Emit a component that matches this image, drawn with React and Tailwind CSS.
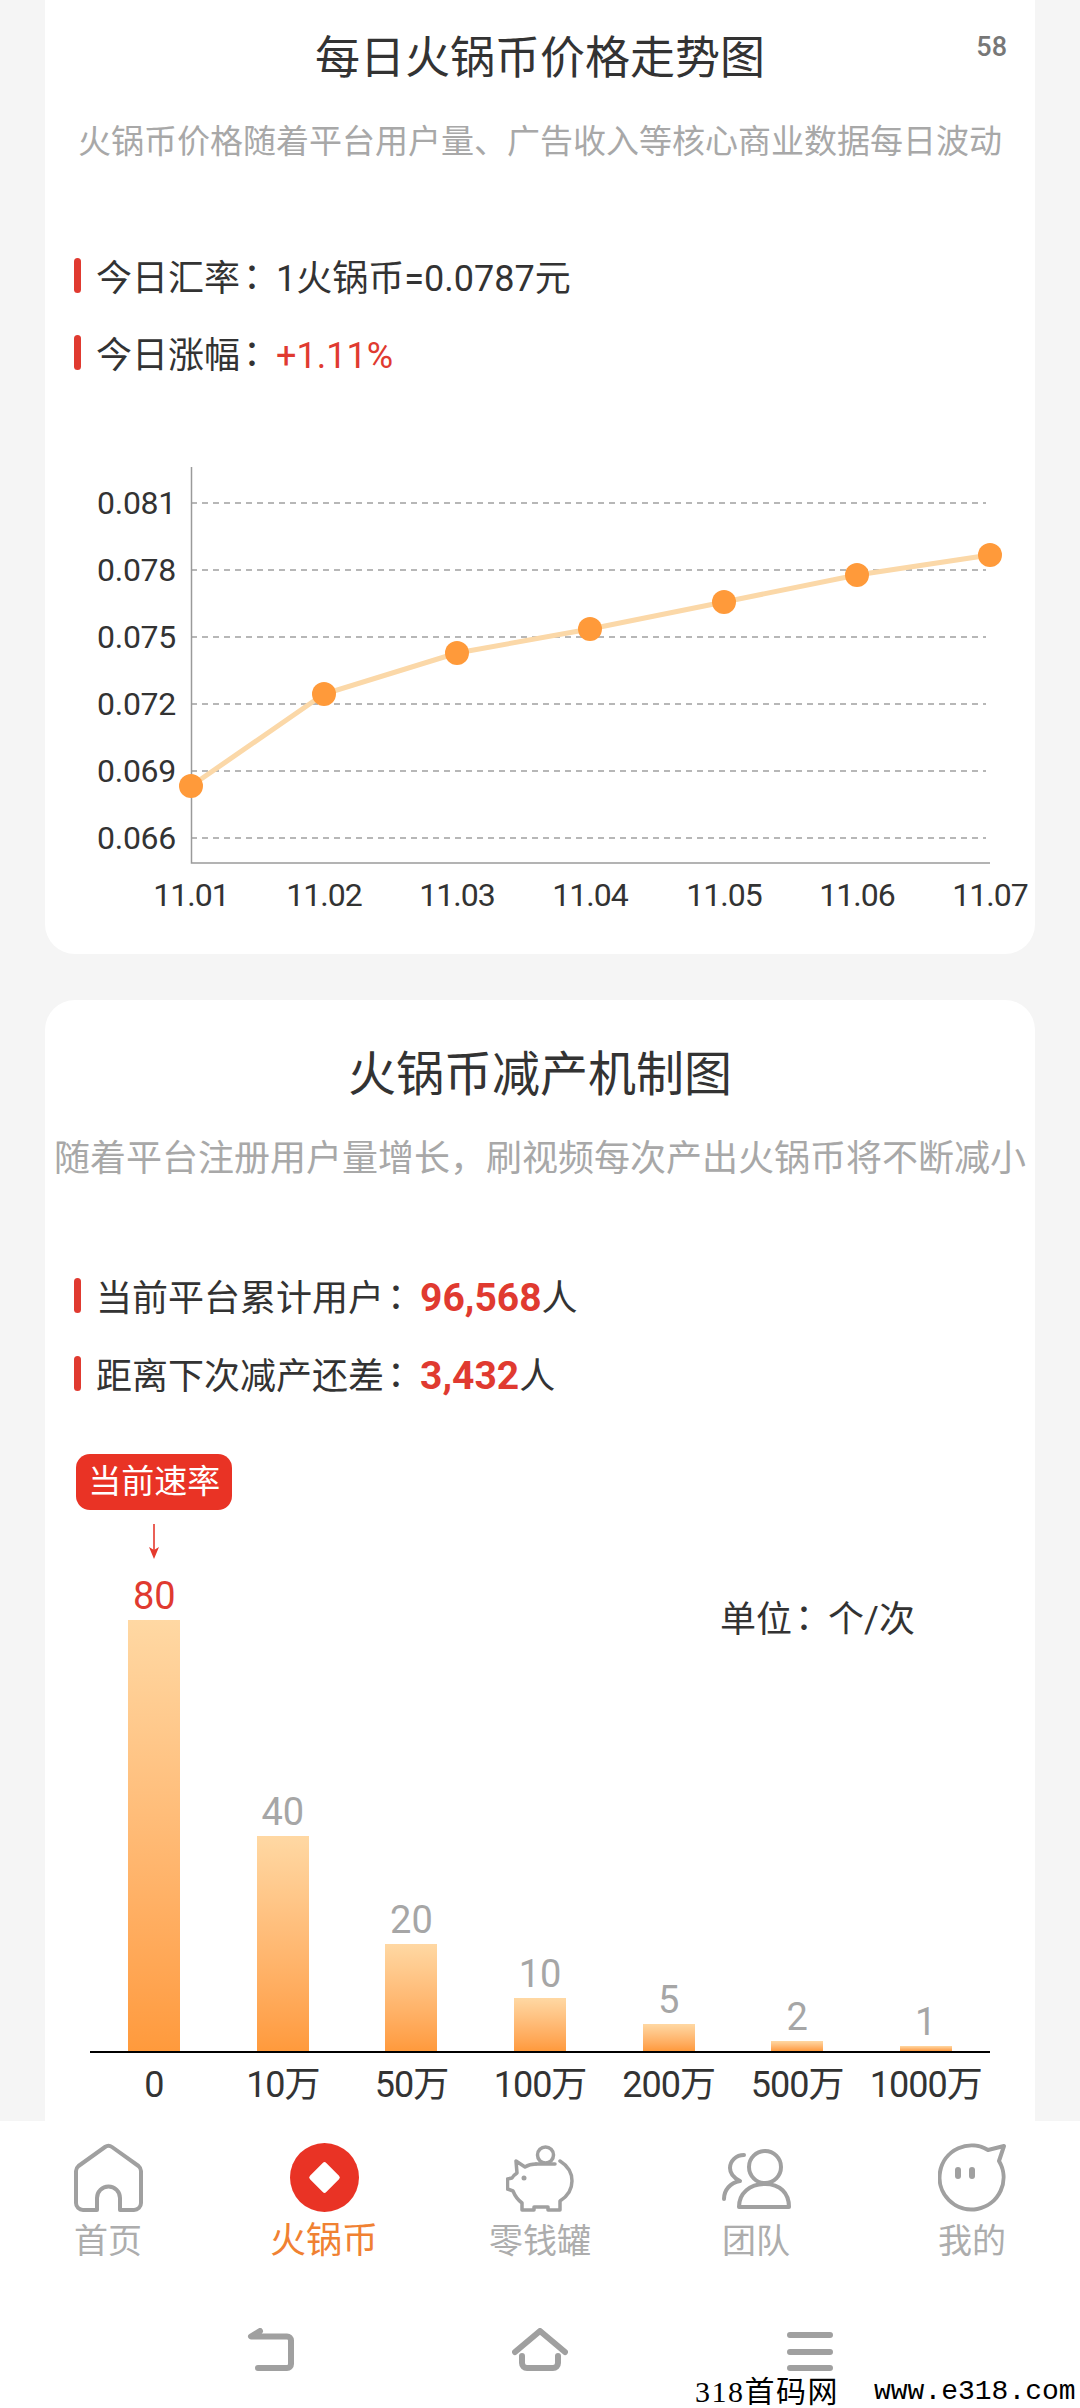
const prices = [
  [191, 786, '11.01'],
  [324, 694, '11.02'],
  [457, 653, '11.03'],
  [590, 629, '11.04'],
  [724, 602, '11.05'],
  [857, 575, '11.06'],
  [990, 555, '11.07'],
];
const ticks = [
  [503, '0.081'],
  [570, '0.078'],
  [637, '0.075'],
  [704, '0.072'],
  [771, '0.069'],
  [838, '0.066'],
];

const bars = [
  { value: 40, label: '10万', h: 'h-[215px]' },
  { value: 20, label: '50万', h: 'h-[107px]' },
  { value: 10, label: '100万', h: 'h-[53px]' },
  { value: 5, label: '200万', h: 'h-[27px]' },
  { value: 2, label: '500万', h: 'h-[10px]' },
  { value: 1, label: '1000万', h: 'h-[5px]' },
];

function Stat({ children }) {
  return (
    <div className="flex items-center gap-[15px] h-[44px] pl-[29px] text-[36px] text-[#333] whitespace-nowrap">
      <span className="w-[7px] h-[35px] rounded-full bg-[#e03a30]" />
      <span className="pt-[3px]">{children}</span>
    </div>
  );
}

// the colon sits mid-height and left of centre in the screenshot
function Colon() {
  return <span className="ml-[3px] mr-[15px] [font-feature-settings:'halt'] [font-family:'Noto_Sans_CJK_TC',sans-serif]">：</span>;
}

function PriceChart() {
  return (
    <svg viewBox="45 460 990 470" className="block w-[990px] h-[470px] mt-[86px]">
      {ticks.map(([y, t]) => (
        <g key={t}>
          <line x1="191" x2="986" y1={y} y2={y} stroke="#a0a0a0" strokeWidth="1.5" strokeDasharray="6 5" />
          <text x="176" y={y + 11} textAnchor="end" fontSize="32" letterSpacing="-0.3" fill="#333">{t}</text>
        </g>
      ))}
      <path d="M191.5 467V863H990" fill="none" stroke="#9a9a9a" strokeWidth="1.5" />
      <polyline points={prices.map((p) => `${p[0]},${p[1]}`).join(' ')} fill="none" stroke="#fbd8a8" strokeWidth="5" />
      {prices.map(([x, y, d]) => (
        <g key={d}>
          <circle cx={x} cy={y} r="12" fill="#ff9a3a" />
          <text x={x} y="906" textAnchor="middle" fontSize="32" letterSpacing="-1" fill="#333">{d}</text>
        </g>
      ))}
    </svg>
  );
}

function BarChart() {
  return (
    <div className="w-[900px] ml-[45px]">
      <div className="flex items-end border-b-2 border-black">
        <div className="flex-1 min-w-0 flex flex-col items-center">
          <div className="shrink-0 w-[156px] h-[56px] rounded-[14px] bg-[#e93325] text-white text-[33px] flex items-center justify-center whitespace-nowrap">
            当前速率
          </div>
          <svg width="14" height="36" viewBox="0 0 14 36" className="mt-[14px]">
            <path d="M7 0V30" stroke="#e5392d" strokeWidth="1.6" />
            <path d="M2 23L7 35L12 23L7 26Z" fill="#e5392d" />
          </svg>
          <div className="mt-[14px] mb-[2px] h-[44px] leading-[44px] text-[38px] text-[#e03a30]">80</div>
          <div className="w-[52px] h-[431px] bg-linear-to-b from-[#ffd8a3] to-[#ff9a3c]" />
        </div>
        {bars.map((b) => (
          <div key={b.label} className="flex-1 min-w-0 flex flex-col items-center">
            <div className="mb-[2px] h-[44px] leading-[44px] text-[38px] text-[#a6a6a6]">{b.value}</div>
            <div className={`w-[52px] ${b.h} bg-linear-to-b from-[#ffd8a3] to-[#ff9a3c]`} />
          </div>
        ))}
      </div>
      <div className="flex mt-[10px] h-[44px] leading-[44px] text-[36px] text-[#333] whitespace-nowrap">
        <div className="flex-1 min-w-0 text-center">0</div>
        {bars.map((b) => (
          <div key={b.label} className="flex-1 min-w-0 flex justify-center tracking-[-1px]">{b.label}</div>
        ))}
      </div>
    </div>
  );
}

function TabItem({ icon, label, active }) {
  return (
    <div className="flex flex-col items-center">
      <div className="h-[69px]">{icon}</div>
      <div className={`mt-[7px] h-[44px] leading-[44px] ${active ? 'text-[36px] text-[#f08132]' : 'text-[34px] text-[#adadad]'}`}>
        {label}
      </div>
    </div>
  );
}

const iconProps = { width: 69, height: 69, viewBox: '0 0 69 69', fill: 'none', stroke: '#a0a0a0', strokeWidth: 4, strokeLinejoin: 'round', strokeLinecap: 'round' };

const HomeIcon = (
  <svg {...iconProps}>
    <path d="M23 67H9a7 7 0 0 1-7-7V28a7 7 0 0 1 2.5-5L31 4a6 6 0 0 1 7 0L64.5 23a7 7 0 0 1 2.5 5V60a7 7 0 0 1-7 7H46V55a11.5 11.5 0 0 0-23 0Z" />
  </svg>
);
const CoinIcon = (
  <svg width="69" height="69" viewBox="0 0 69 69">
    <circle cx="34.5" cy="34.5" r="34.5" fill="#e93325" />
    <rect x="23" y="23" width="23" height="23" rx="2.5" fill="#fff" transform="rotate(45 34.5 34.5)" />
  </svg>
);
const PigIcon = (
  <svg {...iconProps} strokeWidth={3.5}>
    <circle cx="39.5" cy="12" r="8" />
    <path d="M30 21H49" />
    <path d="M30 21C26 21 22 22 19 24L10 18L11 30C8 32 7 33 6 35L1.5 36V46L7 48C9 53 12 57 16 60V67H28V64H42V67H54V58C62 53 66 46 66 38C66 30 62 23 54 18" />
    <circle cx="18" cy="35" r="2.5" fill="#a0a0a0" stroke="none" />
  </svg>
);
const TeamIcon = (
  <svg {...iconProps}>
    <circle cx="43" cy="24" r="16" />
    <path d="M17 64C17 50 28 41 43 41C58 41 67 50 67 64Z" />
    <path d="M22 12C14 12 8 18 8 25C8 30 12 35 18 38C8 40 2 47 2 56" />
  </svg>
);
const MeIcon = (
  <svg {...iconProps}>
    <path d="M50 7L66 3L61 18A32 32 0 1 1 50 7Z" />
    <rect x="17" y="24" width="6" height="12" rx="3" fill="#a0a0a0" stroke="none" />
    <rect x="31" y="24" width="6" height="12" rx="3" fill="#a0a0a0" stroke="none" />
  </svg>
);

export default function App() {
  return (
    <div className="relative w-[1080px] h-[2408px] overflow-hidden flex flex-col bg-[#f5f5f5] [font-family:Roboto,'Noto_Sans_CJK_SC',sans-serif]">
      <section className="relative mx-[45px] h-[954px] shrink-0 bg-white rounded-b-[30px] pt-[29px]">
        <div className="absolute right-[28px] top-[27px] text-[27px] font-medium text-[#777]">58</div>
        <h1 className="text-center text-[45px] leading-[60px] font-normal text-[#333]">每日火锅币价格走势图</h1>
        <p className="mt-[31px] text-center text-[33px] leading-[44px] text-[#a8a8a8] whitespace-nowrap">
          火锅币价格随着平台用户量、广告收入等核心商业数据每日波动
        </p>
        <div className="mt-[89px] flex flex-col gap-[33px]">
          <Stat>今日汇率<Colon />1火锅币=0.0787元</Stat>
          <Stat>今日涨幅<Colon /><span className="text-[#e03a30]">+1.11%</span></Stat>
        </div>
        <PriceChart />
      </section>

      <section className="relative mx-[45px] mt-[46px] flex-1 min-h-0 overflow-hidden bg-white rounded-t-[30px] pt-[45px]">
        <h2 className="text-center text-[48px] leading-[60px] font-normal text-[#333]">火锅币减产机制图</h2>
        <p className="mt-[32px] text-center text-[36px] leading-[44px] text-[#a8a8a8] whitespace-nowrap">
          随着平台注册用户量增长，刷视频每次产出火锅币将不断减小
        </p>
        <div className="mt-[92px] flex flex-col gap-[34px]">
          <Stat>当前平台累计用户<Colon /><b className="font-bold text-[39px] leading-[36px] text-[#e03a30]">96,568</b>人</Stat>
          <Stat>距离下次减产还差<Colon /><b className="font-bold text-[39px] leading-[36px] text-[#e03a30]">3,432</b>人</Stat>
        </div>
        <div className="absolute left-[675px] top-[594px] h-[44px] leading-[44px] text-[36px] text-[#333] whitespace-nowrap">
          单位<Colon />个/次
        </div>
        <div className="mt-[59px]">
          <BarChart />
        </div>
      </section>

      <nav className="shrink-0 h-[287px] bg-white pt-[22px]">
        <div className="grid grid-cols-5">
          <TabItem icon={HomeIcon} label="首页" />
          <TabItem icon={CoinIcon} label="火锅币" active />
          <TabItem icon={PigIcon} label="零钱罐" />
          <TabItem icon={TeamIcon} label="团队" />
          <TabItem icon={MeIcon} label="我的" />
        </div>
        <div className="grid grid-cols-3 px-[135px] mt-[65px] justify-items-center">
          <svg width="47" height="43" viewBox="0 0 47 43" fill="none" stroke="#a0a0a0" strokeWidth="6" strokeLinecap="round" strokeLinejoin="round">
            <path d="M13 3L4 8.5H40a4 4 0 0 1 4 4V36a4 4 0 0 1-4 4H11" />
          </svg>
          <svg width="56" height="43" viewBox="0 0 56 43" fill="none" stroke="#a0a0a0" strokeWidth="6" strokeLinecap="round" strokeLinejoin="round">
            <path d="M3 24L28 3L53 24" />
            <path d="M10 28V35a5 5 0 0 0 5 5H41a5 5 0 0 0 5-5V28" />
          </svg>
          <svg width="46" height="43" viewBox="0 0 46 43" fill="none" stroke="#a0a0a0" strokeWidth="6" strokeLinecap="round">
            <path d="M3 7H43M3 24H43M3 40H43" />
          </svg>
        </div>
      </nav>

      <div className="absolute left-[695px] bottom-0 h-[32px] leading-[32px] flex items-center text-black whitespace-nowrap">
        <span className="text-[30px] tracking-[1.5px] [font-family:'Liberation_Serif','Noto_Sans_CJK_SC',serif]">318首码网</span>
        <span className="ml-[35px] text-[28px] [font-family:'Liberation_Mono',monospace]">www.e318.com</span>
      </div>
    </div>
  );
}
